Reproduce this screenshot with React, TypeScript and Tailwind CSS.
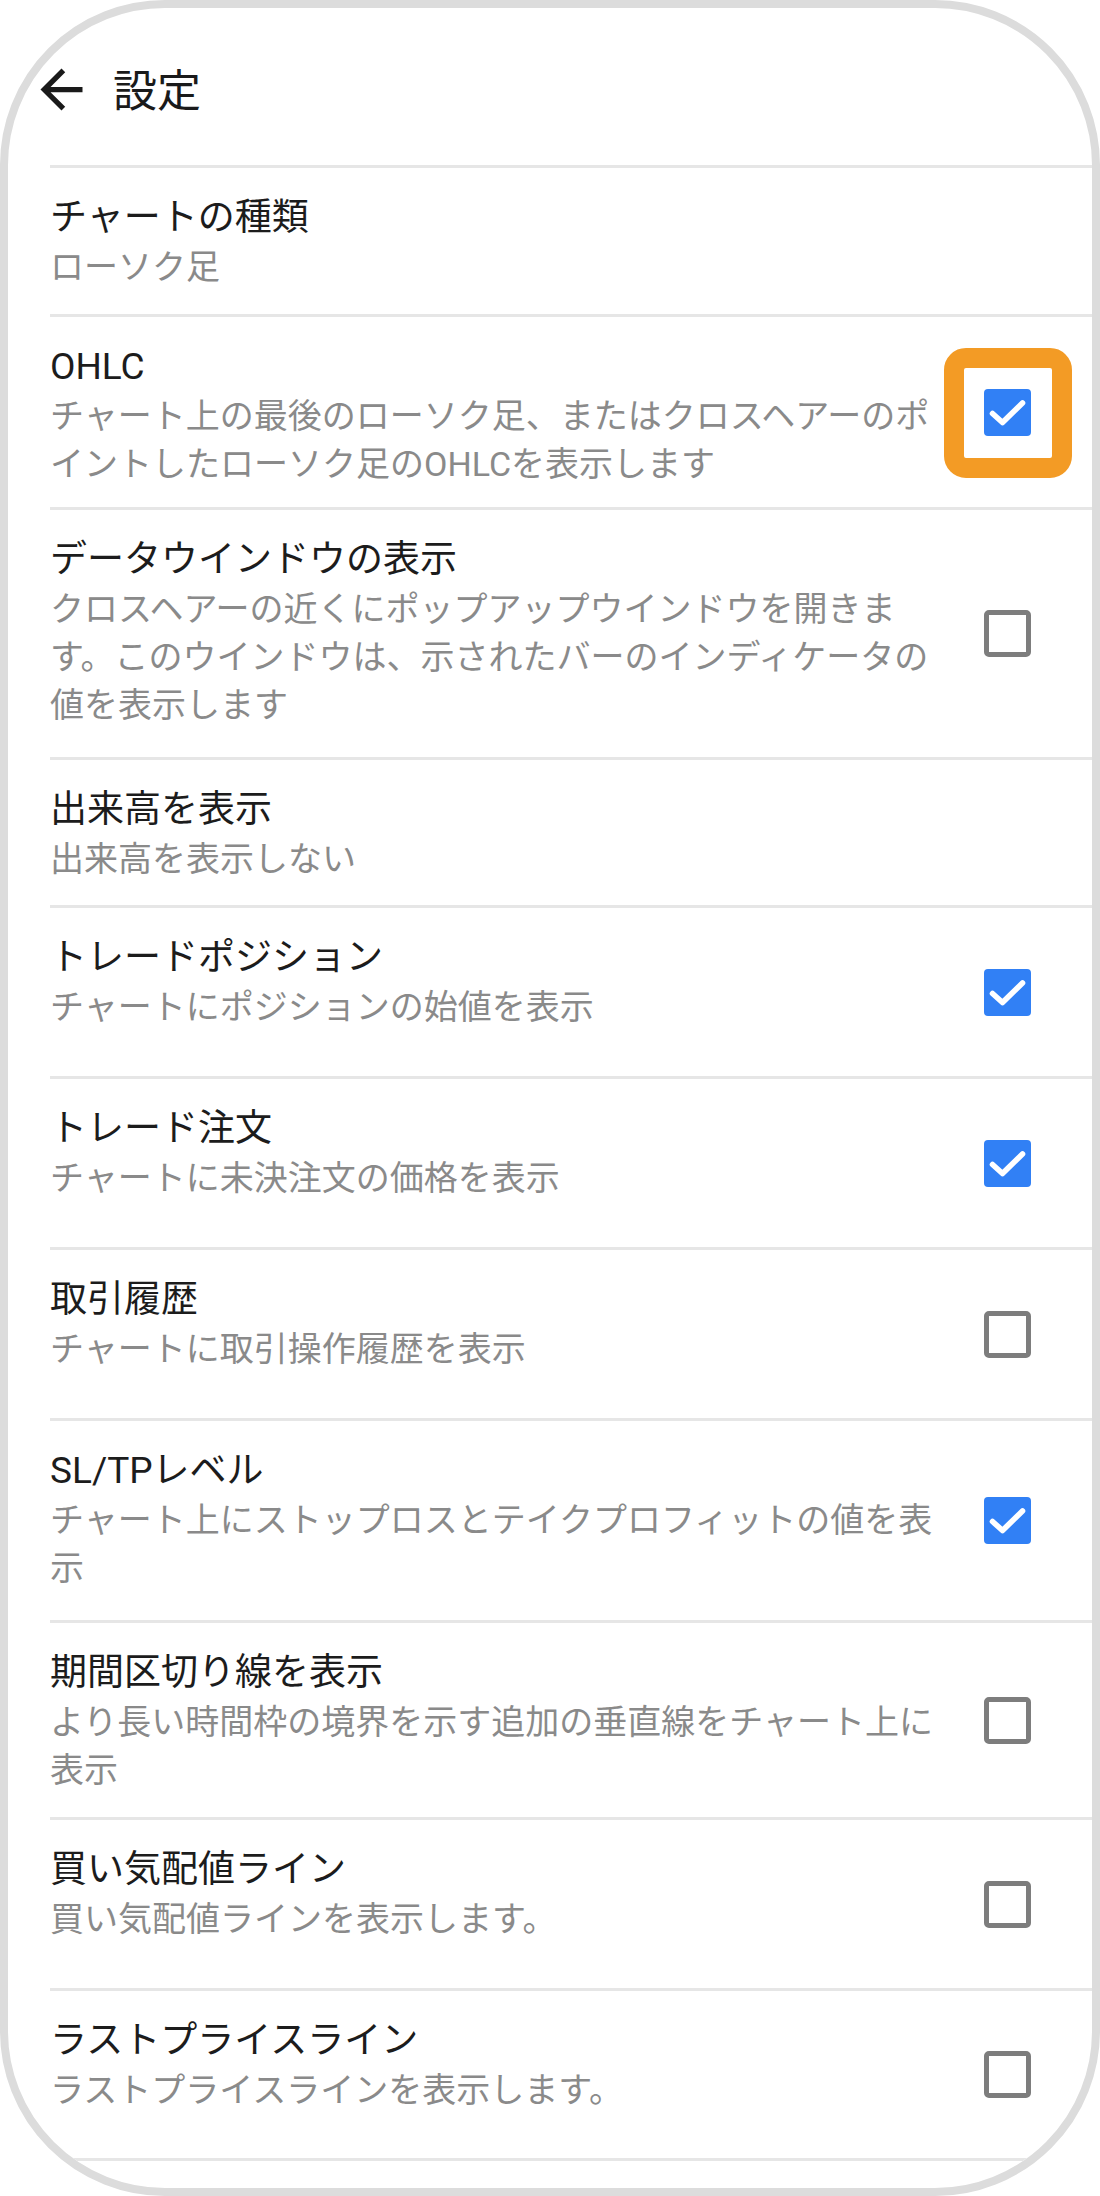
import React from 'react';

type Setting = {
  title: string;
  desc: string;
  checked?: boolean;
  height: string;
  highlight?: boolean;
};

const settings: Setting[] = [
  { title: 'チャートの種類', desc: 'ローソク足', height: 'h-[149px]' },
  {
    title: 'OHLC',
    desc: 'チャート上の最後のローソク足、またはクロスヘアーのポイントしたローソク足のOHLCを表示します',
    checked: true,
    highlight: true,
    height: 'h-[193px]',
  },
  {
    title: 'データウインドウの表示',
    desc: 'クロスヘアーの近くにポップアップウインドウを開きます。このウインドウは、示されたバーのインディケータの値を表示します',
    checked: false,
    height: 'h-[250px]',
  },
  { title: '出来高を表示', desc: '出来高を表示しない', height: 'h-[148px]' },
  { title: 'トレードポジション', desc: 'チャートにポジションの始値を表示', checked: true, height: 'h-[171px]' },
  { title: 'トレード注文', desc: 'チャートに未決注文の価格を表示', checked: true, height: 'h-[171px]' },
  { title: '取引履歴', desc: 'チャートに取引操作履歴を表示', checked: false, height: 'h-[171px]' },
  {
    title: 'SL/TPレベル',
    desc: 'チャート上にストップロスとテイクプロフィットの値を表示',
    checked: true,
    height: 'h-[202px]',
  },
  {
    title: '期間区切り線を表示',
    desc: 'より長い時間枠の境界を示す追加の垂直線をチャート上に表示',
    checked: false,
    height: 'h-[197px]',
  },
  { title: '買い気配値ライン', desc: '買い気配値ラインを表示します。', checked: false, height: 'h-[171px]' },
  { title: 'ラストプライスライン', desc: 'ラストプライスラインを表示します。', checked: false, height: 'h-[170px]' },
];

const BackArrow = () => (
  <svg viewBox="0 0 24 24" className="w-[63px] h-[63px] shrink-0" fill="#1a1a1a">
    <path d="M20 11H7.83l5.59-5.59L12 4l-8 8 8 8 1.41-1.41L7.83 13H20v-2z" />
  </svg>
);

const Checkbox: React.FC<{ checked: boolean; highlight?: boolean }> = ({ checked, highlight }) => (
  <div className="relative w-[47px] h-[47px] mr-[61px] shrink-0">
    {checked ? (
      <div className="w-full h-full rounded-[4px] bg-[#3180f5]">
        <svg viewBox="0 0 47 47" className="w-full h-full">
          <polyline
            points="8.5,24.5 18.5,33.5 38.5,14"
            fill="none"
            stroke="#ffffff"
            strokeWidth="5.6"
            strokeLinecap="round"
            strokeLinejoin="round"
          />
        </svg>
      </div>
    ) : (
      <div className="w-full h-full rounded-[5px] border-[5px] border-[#7d7d7d]" />
    )}
    {highlight && (
      <div className="absolute left-[-40px] top-[-41px] w-[128px] h-[130px] rounded-[22px] border-[20px] border-[#f39b25]" />
    )}
  </div>
);

const SettingRow: React.FC<{ item: Setting }> = ({ item }) => (
  <div className={`flex items-center ml-[42px] border-t-[3px] border-[#e6e6e6] ${item.height}`}>
    <div className="flex-1 self-start pt-[25px] pr-[44px]">
      <div className="text-[37px] leading-[50px] text-[#1c1c1c]">{item.title}</div>
      <div className="text-[34px] leading-[48px] text-[#8a8a8a]">{item.desc}</div>
    </div>
    {item.checked !== undefined && <Checkbox checked={item.checked} highlight={item.highlight} />}
  </div>
);

export default function App() {
  return (
    <div className="w-[1100px] h-[2196px] bg-white font-[family-name:Roboto,'Noto_Sans_CJK_JP',sans-serif]">
      <div className="w-full h-full border-8 border-[#dcdcdc] rounded-[165px] overflow-hidden bg-white flex flex-col">
        <header className="h-[157px] pt-[11px] flex items-center shrink-0">
          <div className="ml-[22px] mb-[6px]">
            <BackArrow />
          </div>
          <h1 className="ml-[20px] text-[44px] leading-none text-[#1a1a1a] font-normal">設定</h1>
        </header>
        {settings.map((s) => (
          <SettingRow key={s.title} item={s} />
        ))}
        <div className="ml-[42px] border-t-[3px] border-[#e6e6e6]" />
      </div>
    </div>
  );
}
